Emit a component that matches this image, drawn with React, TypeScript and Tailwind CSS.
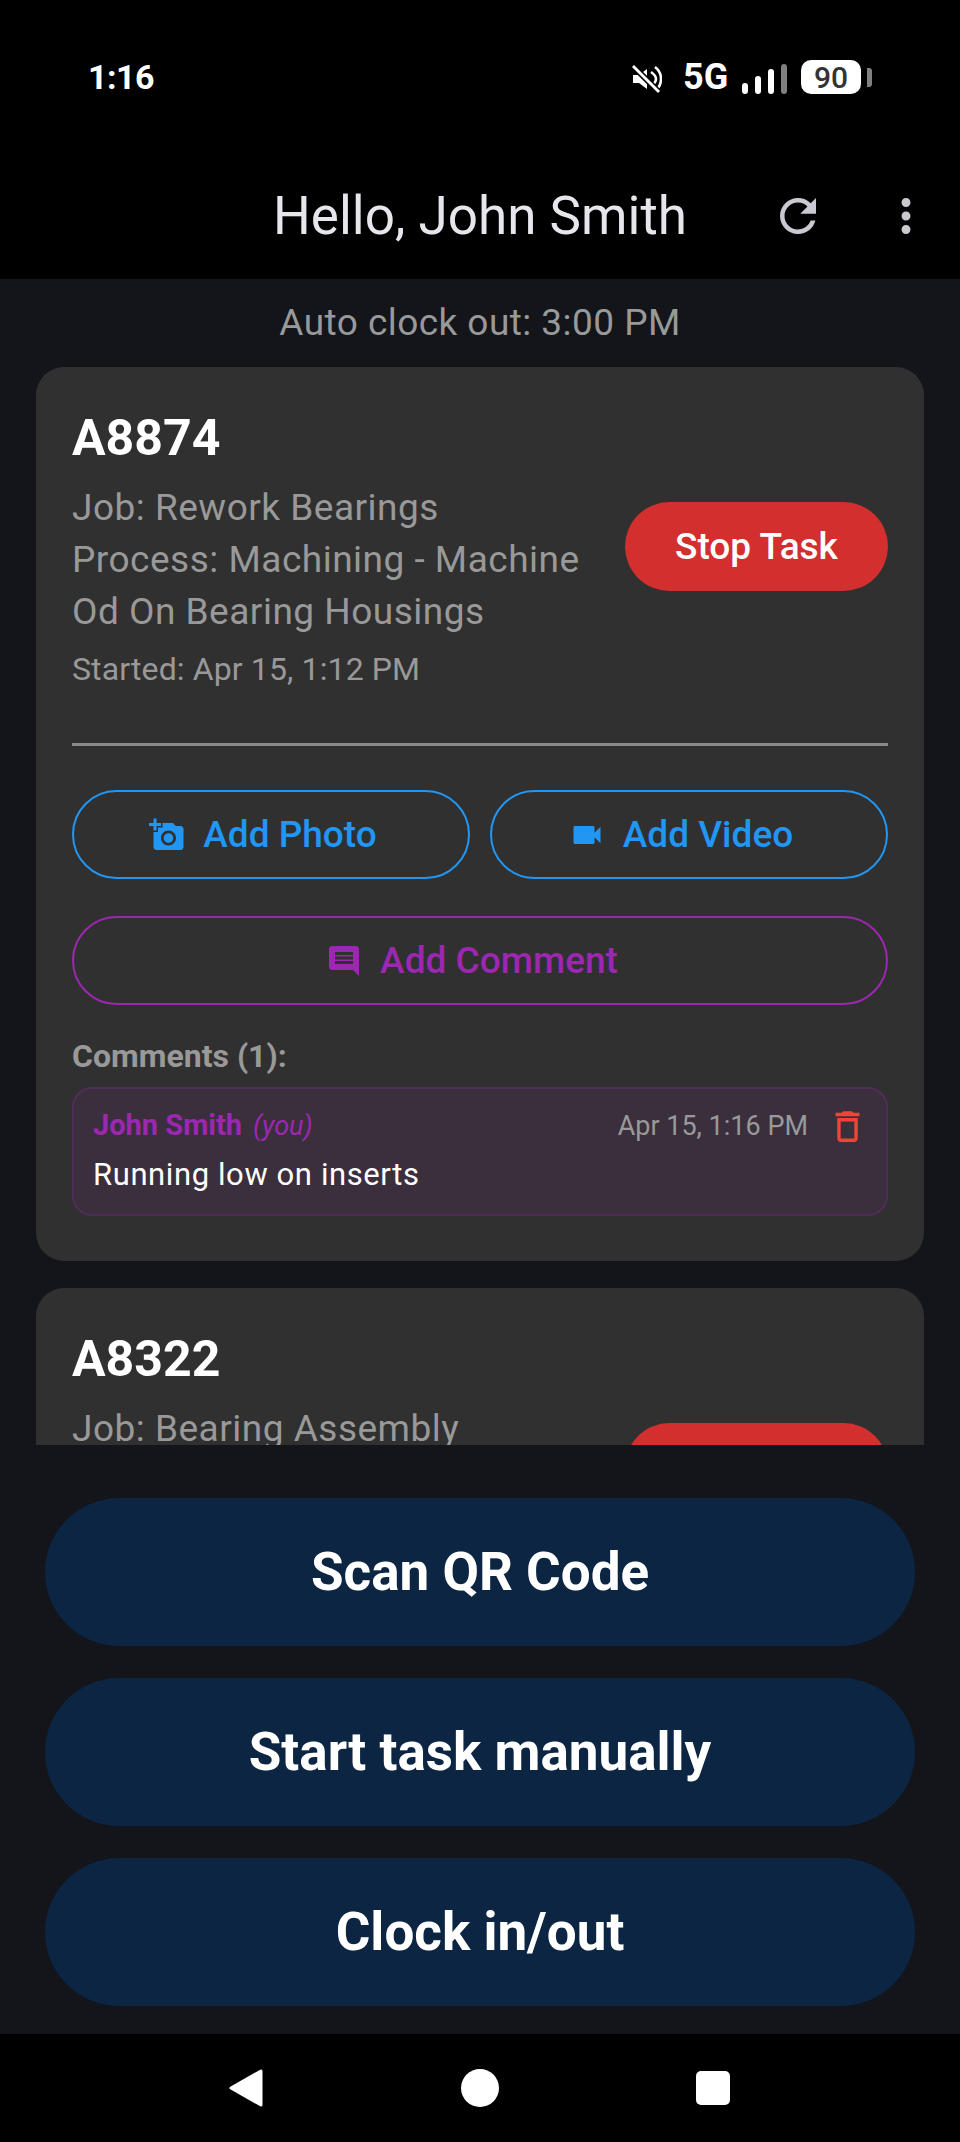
import { MdAddAPhoto, MdComment, MdMoreVert, MdOutlineDelete, MdRefresh, MdVideocam } from 'react-icons/md';

const StatusBar = () => {
  return (
    <div className="flex h-[186px] items-start justify-between pl-[88px] pr-[88px] pt-[60px] text-white">
      <span className="text-[34px] leading-[34px] font-bold tracking-[-0.5px]">1:16</span>
      <div className="flex h-[34px] items-end">
        <svg width="30" height="28" viewBox="0 0 30 28" className="mb-px">
          <path d="M1 10h6l8-6v20l-8-6H1z" fill="#fff" />
          <path d="M19 7c3 2 5 4 5 7s-2 5-5 7M23 2c4 3 6 7 6 12s-2 9-6 12" fill="none" stroke="#fff" strokeWidth="2.6" />
          <path d="M1 1l26 26" stroke="#000" strokeWidth="6" />
          <path d="M1 1l26 26" stroke="#fff" strokeWidth="2.8" />
        </svg>
        <span className="ml-[21px] w-[44px] text-[36px] leading-[34px] font-bold">5G</span>
        <div className="ml-[15px] flex h-[30px] items-end gap-[7px]">
          <div className="h-[11px] w-[6px] rounded-full bg-white" />
          <div className="h-[18px] w-[6px] rounded-full bg-white" />
          <div className="h-[25px] w-[6px] rounded-full bg-white" />
          <div className="h-[30px] w-[6px] rounded-full bg-[#808080]" />
        </div>
        <div className="ml-[14px] flex h-[34px] w-[60px] items-center justify-center rounded-[10px] bg-white text-[30px] font-medium text-[#333]">
          90
        </div>
        <div className="mb-[7px] ml-[6px] h-[19px] w-[5px] rounded-r-[3px] bg-[#808080]" />
      </div>
    </div>
  );
};

const TaskCard = ({ code, job, process, started, children }: any) => {
  return (
    <div className="rounded-[28px] bg-[#303030] p-[36px]">
      <h2 className="text-[50px] leading-[70px] font-bold text-white">{code}</h2>
      <div className="mt-[9px] flex items-start gap-[28px]">
        <div className="flex-1">
          <p className="text-[37px] leading-[52px] tracking-[0.5px] text-[#999]">Job: {job}</p>
          {process && <p className="text-[37px] leading-[52px] tracking-[0.5px] text-[#999]">Process: {process}</p>}
          {started && <p className="mt-[9px] text-[32px] leading-[44px] tracking-[0.12px] text-[#999]">Started: {started}</p>}
        </div>
        <button className="mt-[20px] h-[89px] w-[263px] rounded-full bg-[#d32f2f] text-[37px] font-medium text-white">
          Stop Task
        </button>
      </div>
      {children}
    </div>
  );
};

const OutlineButton = ({ icon, label, className }: any) => {
  return (
    <button className={`flex h-[89px] flex-1 items-center justify-center gap-[18px] rounded-full border-2 pr-[16px] text-[37px] font-medium ${className}`}>
      {icon}
      {label}
    </button>
  );
};

const BottomButton = ({ label }: { label: string }) => {
  return (
    <button className="h-[148px] w-full rounded-full bg-[#0c2543] pt-[2px] text-[53px] font-bold text-white">{label}</button>
  );
};

export default function App() {
  return (
    <div className="flex h-[2142px] w-[960px] flex-col overflow-hidden bg-[#13151a] font-['Roboto',sans-serif]">
      <header className="h-[279px] shrink-0 bg-black">
        <StatusBar />
        <div className="grid h-[60px] grid-cols-[1fr_auto_1fr] items-center">
          <div />
          <h1 className="text-[53px] leading-[60px] text-[#e6e6ec]">Hello, John Smith</h1>
          <div className="flex items-center justify-end pr-[27px] text-[#c9c9d2]">
            <MdRefresh size={54} />
            <MdMoreVert size={54} className="ml-[54px]" />
          </div>
        </div>
      </header>

      <main className="h-[1166px] shrink-0 overflow-hidden px-[36px]">
        <p className="mb-[23px] pt-[22px] text-center text-[37px] leading-[43px] tracking-[0.45px] text-[#999]">
          Auto clock out: 3:00 PM
        </p>
        <TaskCard
          code="A8874"
          job="Rework Bearings"
          process={<>Machining - Machine<br />Od On Bearing Housings</>}
          started="Apr 15, 1:12 PM"
        >
          <div className="mt-[52px] h-[3px] bg-[#8a8a8a]" />
          <div className="mt-[44px] flex gap-[20px]">
            <OutlineButton
              icon={<MdAddAPhoto size={36} />}
              label="Add Photo"
              className="border-[#2196f3] text-[#2196f3]"
            />
            <OutlineButton
              icon={<MdVideocam size={36} />}
              label="Add Video"
              className="border-[#2196f3] text-[#2196f3]"
            />
          </div>
          <div className="mt-[37px] flex">
            <OutlineButton
              icon={<MdComment size={36} />}
              label="Add Comment"
              className="border-[#9c27b0] text-[#9c27b0]"
            />
          </div>
          <p className="mt-[31px] text-[32px] leading-[40px] font-bold text-[#999]">Comments (1):</p>
          <div className="mt-[11px] mb-[9px] h-[129px] rounded-[20px] border-2 border-[#502d56] bg-[#3b2f3d] px-[19px] pt-[18px]">
            <div className="flex h-[38px] items-center">
              <span className="text-[29px] font-bold text-[#9c27b0]">John Smith</span>
              <span className="ml-[11px] text-[27px] text-[#9c27b0] italic">(you)</span>
              <span className="ml-auto text-[27px] text-[#999]">Apr 15, 1:16 PM</span>
              <MdOutlineDelete size={41} className="mr-[-1px] ml-[19px] text-[#f44336]" />
            </div>
            <p className="mt-[10px] text-[31px] leading-[40px] tracking-[0.6px] text-white">Running low on inserts</p>
          </div>
        </TaskCard>
        <div className="mt-[27px]">
          <TaskCard code="A8322" job="Bearing Assembly" />
        </div>
      </main>

      <div className="flex flex-1 flex-col gap-[32px] px-[45px] pt-[53px]">
        <BottomButton label="Scan QR Code" />
        <BottomButton label="Start task manually" />
        <BottomButton label="Clock in/out" />
      </div>

      <nav className="flex h-[108px] shrink-0 items-center justify-center gap-[197px] bg-black pr-[2px]">
        <svg width="36" height="38" viewBox="0 0 36 38">
          <path d="M33 2v34L3 19z" fill="#fff" stroke="#fff" strokeWidth="3" strokeLinejoin="round" />
        </svg>
        <div className="h-[38px] w-[38px] rounded-full bg-white" />
        <div className="h-[34px] w-[34px] rounded-[5px] bg-white" />
      </nav>
    </div>
  );
}
